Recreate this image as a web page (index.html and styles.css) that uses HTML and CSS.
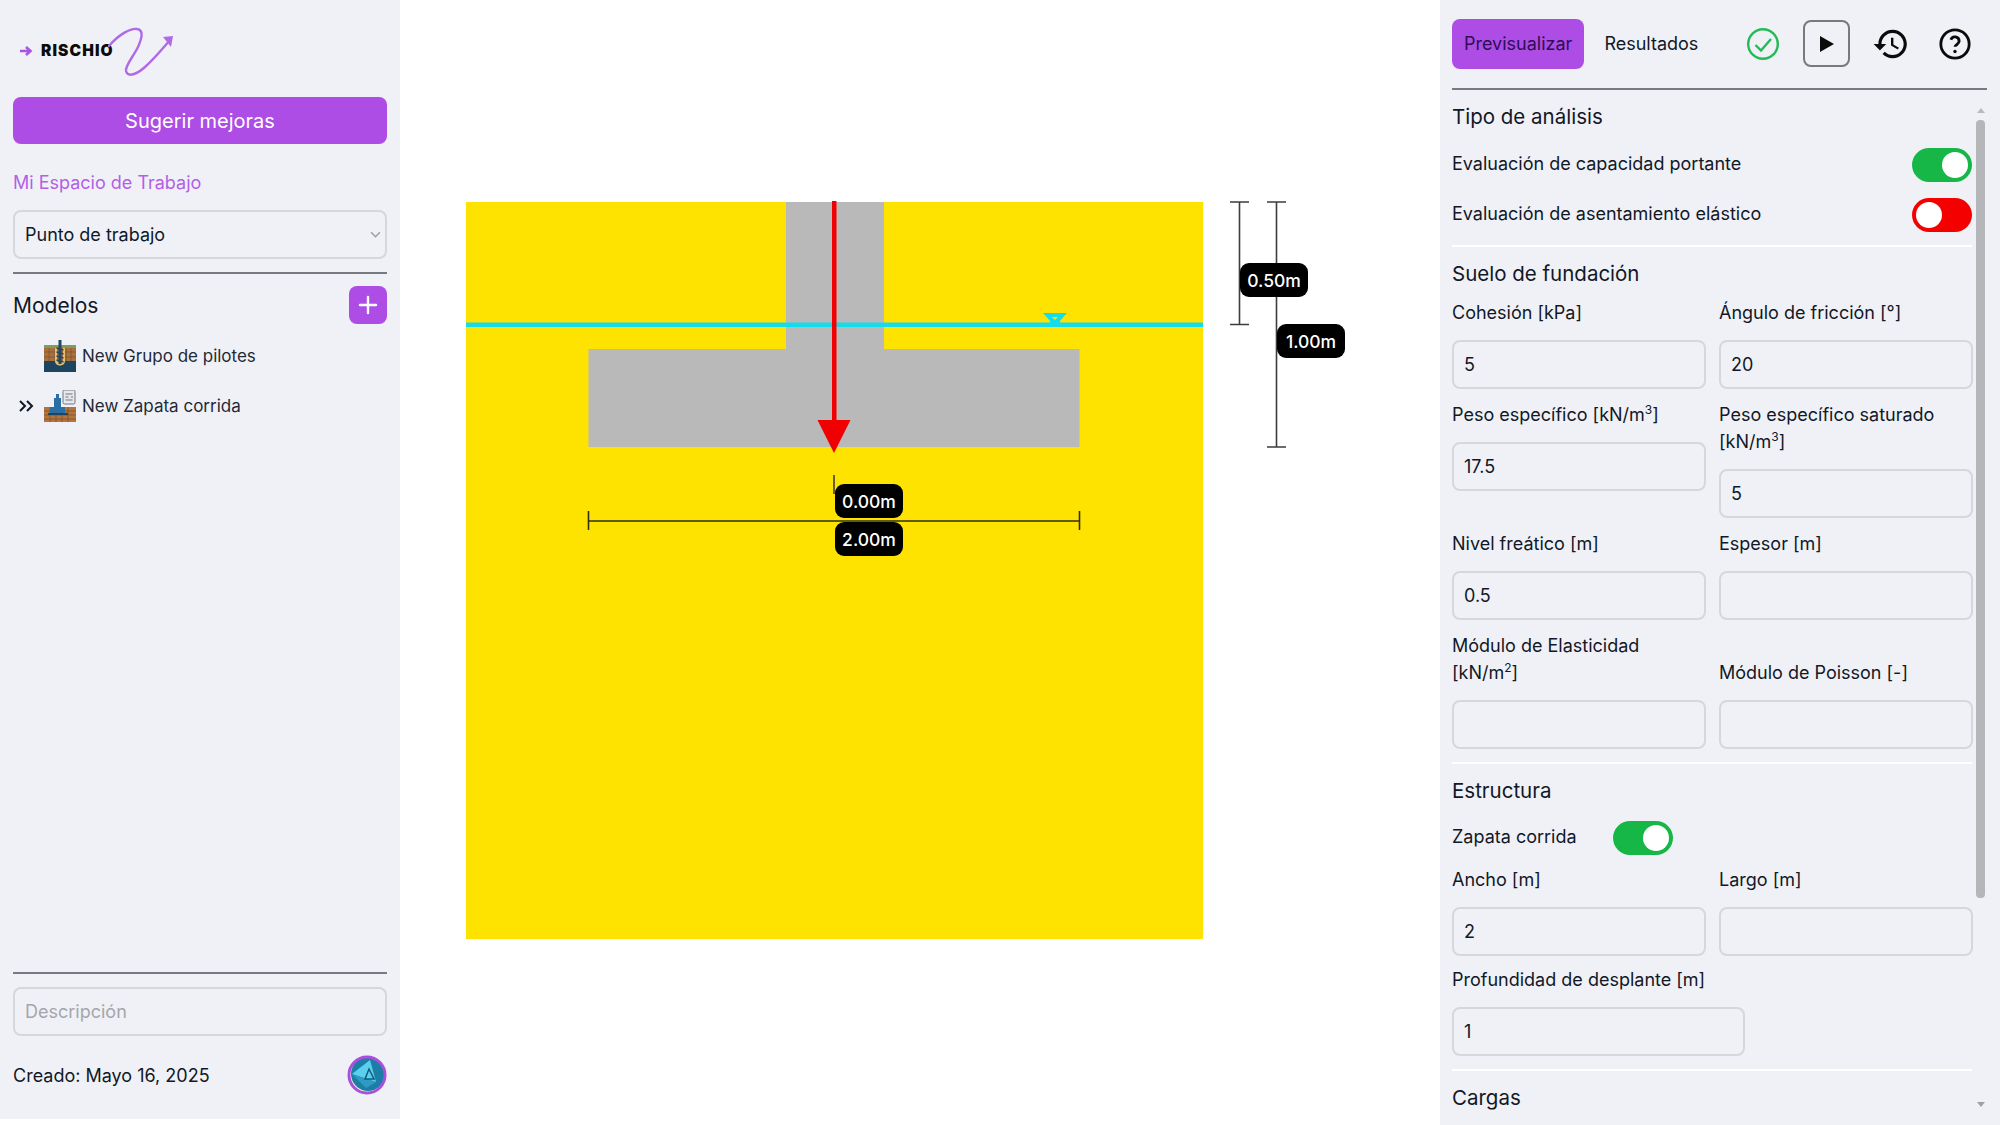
FILE: index.html
```html
<!DOCTYPE html>
<html lang="es">
<head>
<meta charset="utf-8">
<title>Rischio</title>
<link rel="stylesheet" href="styles.css">
</head>
<body>
<div class="app">
  <aside class="sidebar">
    <div class="logo">
      <svg class="logo-arrow" viewBox="0 0 14 14" width="14" height="14"><path d="M1 7h10M7 3l4.500 4-4.500 4" fill="none" stroke="#a855e0" stroke-width="2.600"/></svg>
      <span class="logo-word">RISCHIO</span>
      <svg class="logo-swirl" viewBox="0 0 170 97" width="170" height="97"><path d="M96 46C106 34 118 28 124 29C131 30 129 38 125 47C120 57 112 66 113 71C115 78 124 74 132 67C141 59 150 48 157 40" fill="none" stroke="#b06ae6" stroke-width="2.400" stroke-linecap="round"/><path d="M150 37L160 36L158 47Z" fill="#b06ae6"/></svg>
    </div>
    <button class="btn-primary">Sugerir mejoras</button>
    <div class="workspace-title">Mi Espacio de Trabajo</div>
    <div class="select-wrap">
      <select class="control select"><option>Punto de trabajo</option></select>
      <svg class="chevron" viewBox="0 0 12 8" width="11" height="7"><path d="M1 1.500l5 5 5-5" fill="none" stroke="#9a9ca3" stroke-width="1.600"/></svg>
    </div>
    <hr class="rule rule-top">
    <div class="models-head">
      <span class="models-title">Modelos</span>
      <button class="btn-add" aria-label="Agregar"><svg viewBox="0 0 20 20" width="20" height="20"><path d="M10 2v16M2 10h16" stroke="#fff" stroke-width="2.400" stroke-linecap="round"/></svg></button>
    </div>
    <ul class="models">
      <li class="model">
        <span class="model-mark"></span>
        <svg class="thumb" viewBox="0 0 32 32" width="32" height="32">
          <rect y="5" width="32" height="18" fill="#a9703f"/>
          <rect y="5" width="32" height="3" fill="#7f9d58"/>
          <path d="M0 12h32M0 17h32M5 8v15M11 8v15M22 8v15M27 8v15" stroke="#7c4f2a" stroke-width=".7"/>
          <rect y="21" width="32" height="11" fill="#1d4560"/>
          <path d="M11 8h2v12c0 3 6 3 6 0V8h2v13c0 6-10 6-10 0z" fill="#e3c468"/>
          <rect x="14.500" y="0" width="3" height="24" fill="#24465f"/>
          <path d="M12.500 8l7 2M12.500 12l7 2M12.500 16l7 2M12.500 20l7 2" stroke="#24465f" stroke-width="1.500"/>
        </svg>
        <span class="model-name">New Grupo de pilotes</span>
      </li>
      <li class="model">
        <span class="model-mark"><svg viewBox="0 0 16 12" width="16" height="12"><path d="M2 1l5 5-5 5M9 1l5 5-5 5" fill="none" stroke="#111827" stroke-width="2"/></svg></span>
        <svg class="thumb" viewBox="0 0 32 32" width="32" height="32">
          <rect x="19" y="0" width="12" height="14" rx="1.500" fill="#e7e8ea" stroke="#70757c"/>
          <path d="M21.500 4h7M21.500 7h3M27 7h2M21.500 10h7" stroke="#70757c" stroke-width="1"/>
          <rect y="17" width="32" height="15" fill="#b3743d"/>
          <path d="M0 21h32M0 25h32M0 29h32M6 17v15M12 17v15M18 17v15M24 17v15" stroke="#7c4f2a" stroke-width=".7"/>
          <path d="M12 4h3v4h2v9h4v6H6v-6h4V8h2z" fill="#2b6ea4"/>
          <rect x="4" y="23" width="20" height="2" fill="#1d4560"/>
        </svg>
        <span class="model-name">New Zapata corrida</span>
      </li>
    </ul>
    <div class="sidebar-fill"></div>
    <hr class="rule">
    <input class="control description" placeholder="Descripción">
    <div class="created">
      <span>Creado: Mayo 16, 2025</span>
      <svg class="avatar" viewBox="0 0 40 40" width="40" height="40">
        <circle cx="20" cy="20" r="18" fill="#fbf7d8"/>
        <circle cx="21" cy="19" r="17" fill="#1c7ea6"/>
        <path d="M5 19L23 5L29 27Z" fill="#5bd0ec"/>
        <path d="M5 19L29 27L19 33Z" fill="#2e9bc2"/>
        <path d="M22 14l5 10h-9z" fill="none" stroke="#0f5a7d" stroke-width="1.500"/>
        <circle cx="20" cy="20" r="18" fill="none" stroke="#a84fdc" stroke-width="3"/>
      </svg>
    </div>
  </aside>

  <main class="stage">
    <div class="diagram">
      <svg class="drawing" viewBox="0 0 900 760" width="900" height="760">
        <rect x="0" y="0" width="737" height="737" fill="#ffe300"/>
        <rect x="320" y="0" width="98" height="147" fill="#b9b9b9"/>
        <rect x="122.500" y="147" width="491" height="98" fill="#b9b9b9"/>
        <rect x="0" y="120.500" width="737" height="4.500" fill="#14dcea"/>
        <path d="M577 111h24l-7 8v3h-10v-3z" fill="#14dcea"/>
        <path d="M586 115h6l-3 3z" fill="#ffe300"/>
        <rect x="366" y="-1" width="4.500" height="221" fill="#f00000"/>
        <path d="M351.500 218h33L368 251z" fill="#f00000"/>
        <path d="M368 273v19" stroke="#333" stroke-width="1.500"/>
        <g class="dim"><path d="M122.500 319h491M122.500 309v19M613.500 309v19"/></g>
        <g class="dim dim-grey"><path d="M773.500 0v122.500M764 0h19M764 122.500h19"/></g>
        <g class="dim dim-grey"><path d="M810.500 0v245M801 0h19M801 245h19"/></g>
      </svg>
      <span class="tag tag-a">0.50m</span>
      <span class="tag tag-b">1.00m</span>
      <span class="tag tag-c">0.00m</span>
      <span class="tag tag-d">2.00m</span>
    </div>
  </main>

  <section class="panel">
    <header class="panel-head">
      <button class="tab tab-on">Previsualizar</button>
      <button class="tab">Resultados</button>
      <svg class="ic ic-check" viewBox="0 0 34 34" width="34" height="34"><circle cx="17" cy="17" r="14.800" fill="none" stroke="#22bb55" stroke-width="2.400"/><path d="M9.500 18l5.500 5.500L25 12" fill="none" stroke="#22bb55" stroke-width="2.400"/></svg>
      <button class="btn-play" aria-label="Ejecutar"><svg viewBox="0 0 16 18" width="16" height="18"><path d="M1 1l14 8-14 8z" fill="#0b0b0b"/></svg></button>
      <svg class="ic ic-history" viewBox="0 0 24 24" width="38" height="38"><path d="M13 3c-4.970 0-9 4.030-9 9H1l3.890 3.890.070.140L9 12H6c0-3.870 3.130-7 7-7s7 3.130 7 7-3.130 7-7 7c-1.930 0-3.680-.790-4.940-2.060l-1.420 1.420C8.270 19.990 10.510 21 13 21c4.970 0 9-4.030 9-9s-4.030-9-9-9zm-1 5v5l4.280 2.540.720-1.210-3.500-2.080V8H12z" fill="#0b0b0b"/></svg>
      <svg class="ic ic-help" viewBox="0 0 24 24" width="34" height="34"><circle cx="12" cy="12" r="10" fill="none" stroke="#0b0b0b" stroke-width="2"/><path d="M9.090 9a3 3 0 0 1 5.830 1c0 2-2.920 2.600-2.920 4" fill="none" stroke="#0b0b0b" stroke-width="2"/><circle cx="12" cy="17.300" r="1.200" fill="#0b0b0b"/></svg>
    </header>
    <div class="panel-body">
      <form class="form">
        <div class="group group-analysis">
          <h2 class="group-title">Tipo de análisis</h2>
          <div class="switch-row"><span>Evaluación de capacidad portante</span><span class="toggle toggle-on"></span></div>
          <div class="switch-row"><span>Evaluación de asentamiento elástico</span><span class="toggle toggle-off"></span></div>
        </div>
        <div class="group group-soil">
          <h2 class="group-title">Suelo de fundación</h2>
          <div class="fields">
            <label class="field"><span class="field-label">Cohesión [kPa]</span><input class="control" value="5"></label>
            <label class="field"><span class="field-label">Ángulo de fricción [°]</span><input class="control" value="20"></label>
            <label class="field"><span class="field-label">Peso específico [kN/m<sup>3</sup>]</span><input class="control" value="17.5"></label>
            <label class="field"><span class="field-label">Peso específico saturado [kN/m<sup>3</sup>]</span><input class="control" value="5"></label>
            <label class="field"><span class="field-label">Nivel freático [m]</span><input class="control" value="0.5"></label>
            <label class="field"><span class="field-label">Espesor [m]</span><input class="control"></label>
            <label class="field field-bottom"><span class="field-label">Módulo de Elasticidad [kN/m<sup>2</sup>]</span><input class="control"></label>
            <label class="field field-bottom"><span class="field-label">Módulo de Poisson [-]</span><input class="control"></label>
          </div>
        </div>
        <div class="group group-structure">
          <h2 class="group-title">Estructura</h2>
          <div class="switch-row switch-row-inline"><span>Zapata corrida</span><span class="toggle toggle-on"></span></div>
          <div class="fields fields-tight">
            <label class="field"><span class="field-label">Ancho [m]</span><input class="control" value="2"></label>
            <label class="field"><span class="field-label">Largo [m]</span><input class="control"></label>
          </div>
          <label class="field field-single"><span class="field-label">Profundidad de desplante [m]</span><input class="control" value="1"></label>
        </div>
        <div class="group group-last">
          <h2 class="group-title">Cargas</h2>
        </div>
      </form>
      <div class="scrollbar" aria-hidden="true">
        <span class="scroll-up"></span>
        <span class="scroll-thumb"></span>
        <span class="scroll-down"></span>
      </div>
    </div>
  </section>
</div>
</body>
</html>
```

FILE: styles.css
```css
* { box-sizing: border-box; }
html, body { margin: 0; height: 100%; }
body {
  background: #fff;
  color: #111827;
  font-family: Inter, "Noto Sans", sans-serif;
  font-size: 18px;
  overflow: hidden;
}
button, input, select { font: inherit; color: inherit; }
.app {
  display: grid;
  grid-template-columns: 400px 1040px 560px;
  height: 1125px;
}

/* sidebar */
.sidebar {
  display: flex;
  flex-direction: column;
  height: 1119px;
  padding: 0 13px 24px;
  background: #f0f1f6;
}
.logo {
  position: relative;
  flex: none;
  display: flex;
  align-items: center;
  height: 97px;
  padding: 4px 0 0 6px;
}
.logo-word {
  margin-left: 8px;
  color: #0b0b0b;
  font-size: 15.5px;
  font-weight: 900;
  letter-spacing: 1.1px;
  line-height: 14px;
}
.logo-swirl { position: absolute; left: -0px; top: 0; }
.btn-primary {
  flex: none;
  height: 47px;
  border: 0;
  border-radius: 8px;
  background: #ae4ce6;
  color: #fff;
  font-size: 20px;
}
.workspace-title {
  margin-top: 26px;
  margin-bottom: 14px;
  color: #b35fe6;
  line-height: 26px;
}
.control {
  display: block;
  width: 100%;
  height: 49px;
  padding: 0 10px;
  border: 2px solid #d6d7dc;
  border-radius: 8px;
  background: transparent;
  outline: 0;
  font-size: 18px;
}
.control::placeholder { color: #a4a6ac; opacity: 1; }
.select-wrap { position: relative; flex: none; }
.select { appearance: none; }
.chevron { position: absolute; right: 6px; top: 21px; }
.rule {
  flex: none;
  width: 100%;
  height: 2px;
  margin: 0;
  border: 0;
  background: #777a80;
}
.rule-top { margin-top: 13px; }
.models-head {
  display: flex;
  align-items: center;
  justify-content: space-between;
  margin-top: 12px;
}
.models-title { font-size: 21px; }
.btn-add {
  display: flex;
  align-items: center;
  justify-content: center;
  width: 38px;
  height: 38px;
  padding: 0;
  border: 0;
  border-radius: 8px;
  background: #ae4ce6;
}
.models {
  display: flex;
  flex-direction: column;
  gap: 18px;
  margin: 16px 0 0;
  padding: 0 0 0 5px;
  list-style: none;
}
.model {
  display: flex;
  align-items: center;
  height: 32px;
}
.model-mark {
  display: flex;
  width: 26px;
}
.thumb { flex: none; }
.model-name {
  margin-left: 6px;
  font-size: 17px;
  color: #1f2937;
}
.sidebar-fill { flex: 1; }
.description { flex: none; margin-top: 13px; }
.created {
  display: flex;
  align-items: center;
  justify-content: space-between;
  margin-top: 19px;
}
.avatar { flex: none; }

/* stage */
.stage { padding: 202px 0 0 66px; background: #fff; }
.diagram { position: relative; width: 900px; height: 760px; }
.drawing { display: block; overflow: visible; }
.dim { fill: none; stroke: #2f2f10; stroke-width: 1.6; }
.dim-grey { stroke: #3d3d3d; }
.tag {
  position: absolute;
  display: flex;
  align-items: center;
  justify-content: center;
  width: 68px;
  height: 34px;
  border-radius: 9px;
  background: #000;
  color: #fff;
  font-size: 17.500px;
  font-weight: 500;
}
.tag-a { left: 774px; top: 61px; }
.tag-b { left: 811px; top: 122px; }
.tag-c { left: 369px; top: 282px; }
.tag-d { left: 369px; top: 320px; }

/* right panel */
.panel {
  height: 1125px;
  overflow: hidden;
  padding: 0 13px 0 12px;
  background: #f0f1f6;
}
.panel-head {
  display: flex;
  align-items: center;
  height: 90px;
  padding-bottom: 1px;
  border-bottom: 2px solid #777a80;
}
.tab {
  height: 50px;
  padding: 0 12px;
  border: 0;
  border-radius: 8px;
  background: transparent;
  font-size: 18px;
}
.tab-on { background: #ae4ce6; color: #2e0e52; margin-right: 8px; }
.ic { flex: none; }
.ic-check { margin-left: 36px; }
.btn-play {
  display: flex;
  align-items: center;
  justify-content: center;
  width: 47px;
  height: 47px;
  margin-left: 23px;
  padding: 0;
  border: 2px solid #77797f;
  border-radius: 8px;
  background: transparent;
}
.ic-history { margin-left: 22px; }
.ic-help { margin-left: 28px; }
.panel-body { display: flex; gap: 4px; }
.form { width: 520px; flex: none; }
.group {
  padding-bottom: 13px;
  border-bottom: 2px solid #fff;
}
.group-last { border-bottom: 0; }
.group-title {
  margin: 12px 0 0;
  font-size: 20.500px;
  font-weight: 400;
  line-height: 30px;
}
.switch-row {
  display: flex;
  align-items: center;
  justify-content: space-between;
  height: 34px;
  margin-top: 16px;
}
.switch-row span:first-child { margin-top: -3px; }
.switch-row-inline { justify-content: flex-start; margin-top: 15px; }
.switch-row-inline .toggle { margin-left: 36px; }
.toggle {
  position: relative;
  flex: none;
  width: 60px;
  height: 34px;
  border-radius: 17px;
}
.toggle::after {
  content: "";
  position: absolute;
  top: 4px;
  width: 26px;
  height: 26px;
  border-radius: 50%;
  background: #fff;
}
.toggle-on { background: #16b746; }
.toggle-on::after { right: 4px; }
.toggle-off { background: #f50000; }
.toggle-off::after { left: 4px; }
.fields {
  display: grid;
  grid-template-columns: 254px 254px;
  column-gap: 13px;
  row-gap: 12px;
  margin-top: 10px;
}
.fields-tight { margin-top: 11px; }
.field { display: flex; flex-direction: column; }
.field-bottom { justify-content: flex-end; }
.field-label {
  display: block;
  margin-bottom: 14px;
  line-height: 27px;
}
.field-label sup { font-size: 12px; line-height: 0; }
.field-single { width: 293px; margin-top: 10px; }
.scrollbar {
  display: flex;
  flex-direction: column;
  align-items: center;
  width: 9px;
  padding-top: 18px;
}
.scroll-up, .scroll-down {
  width: 0;
  height: 0;
  border-left: 4px solid transparent;
  border-right: 4px solid transparent;
}
.scroll-up { border-bottom: 5px solid #b9babf; }
.scroll-thumb {
  width: 9px;
  height: 778px;
  margin-top: 7px;
  border-radius: 4px;
  background: #b5b6ba;
}
.scroll-down { margin-top: 204px; border-top: 5px solid #9fa0a5; }
```
